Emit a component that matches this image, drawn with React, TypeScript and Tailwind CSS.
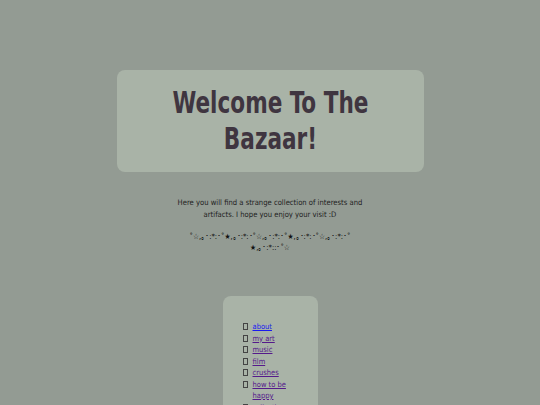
import React from "react";

const links = [
  { label: "about", visited: false },
  { label: "my art", visited: true },
  { label: "music", visited: true },
  { label: "film", visited: true },
  { label: "crushes", visited: true },
  { label: "how to be happy", visited: true },
  { label: "collections", visited: true },
];

export default function App() {
  return (
    <div
      className="h-[405px] w-full overflow-hidden bg-[#939b93] text-[#222]"
      style={{ fontFamily: '"DejaVu Sans Condensed", "DejaVu Sans", sans-serif' }}
    >
      <div className="flex flex-col items-center pt-[70px]">
        <div className="flex h-[102px] w-[307px] items-center justify-center rounded-[8px] bg-[#a9b3a7]">
          <h1 className="scale-x-[0.8] text-center text-[30px] leading-[36px] font-bold text-[#3f3540]">
            Welcome To The
            <br />
            Bazaar!
          </h1>
        </div>

        <p className="mt-[25px] text-center text-[7.6px] leading-[12px]">
          Here you will find a strange collection of interests and
          <br />
          artifacts. I hope you enjoy your visit :D
        </p>

        <p className="mt-[10px] text-center text-[7.5px] leading-[11px] text-[#111]">
          ˚☆,｡･:*:･˚★,｡･:*:･˚☆,｡･:*:･˚★,｡･:*:･˚☆,｡･:*:･˚
          <br />
          ★,｡･:*::･˚☆
        </p>

        <div className="mt-[43px] w-[95px] shrink-0 rounded-t-[8px] bg-[#a9b3a7] pt-[25px] pr-[12px] pb-[20px] pl-[20px]">
          <ul className="text-[7.5px] leading-[11.5px]">
            {links.map((link) => (
              <li key={link.label} className="flex gap-[5px]">
                <span className="mt-[2px] h-[7px] w-[5px] shrink-0 border border-[#444]" />
                <a
                  href="#"
                  className={`max-w-[40px] underline ${link.visited ? "text-[#551a8b]" : "text-[#1a1aee]"}`}
                >
                  {link.label}
                </a>
              </li>
            ))}
          </ul>
        </div>
      </div>
    </div>
  );
}
